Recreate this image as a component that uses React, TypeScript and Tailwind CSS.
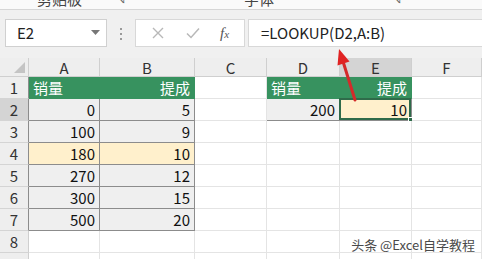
import React from "react";

const font = { fontFamily: '"Noto Sans CJK SC", "Noto Sans", sans-serif' };

const colWidths = "grid-cols-[29px_71px_95px_72px_73px_72px_70px]";
const colLetters = ["A", "B", "C", "D", "E", "F"];

type Cell = {
  text?: string;
  kind?: "head" | "data" | "hl" | "empty" | "sel";
  align?: "left" | "right";
};

const E: Cell = { kind: "empty" };

const rows: Cell[][] = [
  [
    { text: "销量", kind: "head", align: "left" },
    { text: "提成", kind: "head", align: "right" },
    E,
    { text: "销量", kind: "head", align: "left" },
    { text: "提成", kind: "head", align: "right" },
    E,
  ],
  [
    { text: "0", kind: "data" },
    { text: "5", kind: "data" },
    E,
    { text: "200", kind: "data" },
    { text: "10", kind: "sel" },
    E,
  ],
  [{ text: "100", kind: "data" }, { text: "9", kind: "data" }, E, E, E, E],
  [{ text: "180", kind: "hl" }, { text: "10", kind: "hl" }, E, E, E, E],
  [{ text: "270", kind: "data" }, { text: "12", kind: "data" }, E, E, E, E],
  [{ text: "300", kind: "data" }, { text: "15", kind: "data" }, E, E, E, E],
  [{ text: "500", kind: "data" }, { text: "20", kind: "data" }, E, E, E, E],
  [E, E, E, E, E, E],
  [E, E, E, E, E, E],
];

function GridCell({ cell }: { cell: Cell }) {
  const kind = cell.kind ?? "empty";
  const bg =
    kind === "head"
      ? "bg-[#37925f] text-white border-[#37925f]"
      : kind === "data"
        ? "bg-[#efefef] text-[#111] border-[#8c8c8c]"
        : kind === "hl" || kind === "sel"
          ? "bg-[#fff0cc] text-[#111] border-[#8c8c8c]"
          : "bg-white border-[#e4e4e4]";
  return (
    <div
      className={`relative flex h-[22px] items-center border-r border-b px-[4px] text-[15px] leading-none ${bg} ${
        cell.align === "left" ? "justify-start" : "justify-end"
      }`}
    >
      <span className="pb-[1px]">{cell.text}</span>
      {kind === "sel" && (
        <>
          <div className="pointer-events-none absolute -left-[1px] -top-[1px] -right-[0px] -bottom-[0px] border-2 border-[#2f6b4a]" />
          <div className="absolute -bottom-[3px] -right-[3px] h-[6px] w-[6px] border border-white bg-[#2f6b4a]" />
        </>
      )}
    </div>
  );
}

export default function App() {
  return (
    <div
      className="relative h-[259px] w-[482px] overflow-hidden bg-white text-[#222]"
      style={font}
    >
      {/* ribbon bottom edge */}
      <div className="flex h-[10px] items-end overflow-hidden border-b border-[#d6d6d6] bg-[#fafafa] text-[15px] leading-none text-[#444]">
        <span className="ml-[37px] mb-[3px]">剪贴板</span>
        <span className="ml-[34px] mb-[4px] text-[10px] text-[#666]">↘</span>
        <span className="ml-[118px] mb-[3px]">字体</span>
        <span className="ml-[118px] mb-[4px] text-[10px] text-[#666]">↘</span>
      </div>

      {/* formula bar */}
      <div className="flex h-[48px] items-start bg-[#f0f0f0] pt-[9px]">
        <div className="ml-[5px] flex h-[28px] w-[102px] items-center justify-between border border-[#d0d0d0] bg-white pl-[11px] pr-[6px] text-[15px] text-[#222]">
          <span>E2</span>
          <svg width="9" height="6" viewBox="0 0 9 6">
            <path d="M0 0h9L4.5 5z" fill="#777" />
          </svg>
        </div>
        <div className="ml-[13px] mt-[9px] flex flex-col gap-[3px]">
          <div className="h-[2px] w-[2px] bg-[#9a9a9a]" />
          <div className="h-[2px] w-[2px] bg-[#9a9a9a]" />
          <div className="h-[2px] w-[2px] bg-[#9a9a9a]" />
        </div>
        <div className="ml-[13px] flex h-[28px] w-[110px] items-center border border-[#d8d8d8] bg-white">
          <svg className="ml-[16px]" width="12" height="12" viewBox="0 0 12 12">
            <path d="M1 1l10 10M11 1L1 11" stroke="#b8b8b8" strokeWidth="1.4" />
          </svg>
          <svg className="ml-[22px]" width="14" height="12" viewBox="0 0 14 12">
            <path d="M1 6.5l4 4L13 1.5" stroke="#b8b8b8" strokeWidth="1.5" fill="none" />
          </svg>
          <span
            className="ml-[20px] text-[15px] italic text-[#555]"
            style={{ fontFamily: '"Liberation Serif", serif' }}
          >
            f<span className="text-[11px]">x</span>
          </span>
        </div>
        <div className="ml-[3px] flex h-[28px] flex-1 items-center border border-r-0 border-[#d8d8d8] bg-white pl-[12px] text-[15px] text-[#222]">
          =LOOKUP(D2,A:B)
        </div>
      </div>

      {/* sheet */}
      <div className={`grid ${colWidths}`}>
        <div className="relative h-[19px] border-r border-b border-[#cfcfcf] bg-[#eeeeee]">
          <svg className="absolute bottom-[3px] right-[3px]" width="11" height="11" viewBox="0 0 11 11">
            <path d="M11 0v11H0z" fill="#c4c4c4" />
          </svg>
        </div>
        {colLetters.map((c) => (
          <div
            key={c}
            className={`flex h-[19px] items-center justify-center border-r border-b border-[#cfcfcf] text-[15px] leading-none text-[#333] ${
              c === "E" ? "bg-[#d4d4d4]" : "bg-[#eeeeee]"
            }`}
          >
            {c}
          </div>
        ))}
        {rows.map((r, i) => (
          <React.Fragment key={i}>
            <div
              className={`flex h-[22px] items-center justify-center border-r border-b text-[15px] leading-none text-[#333] ${
                i < 7 ? "border-r-[#8c8c8c]" : "border-r-[#cfcfcf]"
              } border-b-[#d4d4d4] ${i === 1 ? "bg-[#d4d4d4]" : "bg-[#eeeeee]"}`}
            >
              {i + 1}
            </div>
            {r.map((cell, j) => (
              <GridCell key={j} cell={cell} />
            ))}
          </React.Fragment>
        ))}
      </div>

      {/* red arrow annotation */}
      <svg className="pointer-events-none absolute left-0 top-0" width="482" height="259" viewBox="0 0 482 259">
        <path d="M355 100L343.5 63" stroke="#d42a2a" strokeWidth="3" strokeLinecap="round" />
        <path d="M339 49L349.5 61.5L337.5 65.5z" fill="#e02323" />
      </svg>

      {/* watermark */}
      <div
        className="absolute bottom-[8px] right-[7px] text-[13px] leading-none text-[#4a4a4a]"
        style={{ textShadow: "0 0 2px #fff, 0 0 2px #fff" }}
      >
        头条 @Excel自学教程
      </div>
    </div>
  );
}
